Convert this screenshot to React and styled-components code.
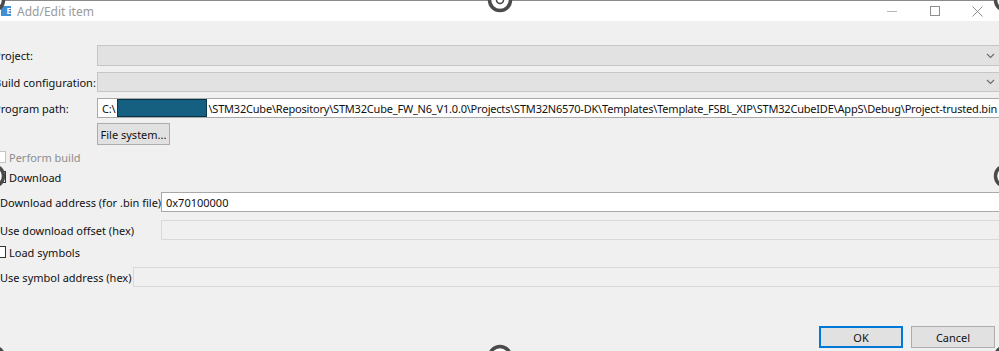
import React from 'react';
import styled, { createGlobalStyle } from 'styled-components';

const GlobalStyle = createGlobalStyle`
  html, body {
    margin: 0;
    padding: 0;
    background: #f0f0f0;
    overflow: hidden;
  }
`;

const Page = styled.div`
  position: relative;
  width: 999px;
  height: 351px;
  overflow: hidden;
  background: #f0f0f0;
  font-family: 'Noto Sans', 'Open Sans', sans-serif;
  font-size: 11px;
  color: #111;
`;

const TitleBar = styled.div`
  height: 21px;
  background: #ffffff;
  border-top: 1px solid #8a8a8a;
  box-sizing: border-box;
  display: flex;
  align-items: center;
`;

const AppIcon = styled.div`
  width: 10px;
  height: 10px;
  margin-left: 1px;
  background: #3d8fd6;
  color: #fff;
  font-size: 8px;
  font-weight: 700;
  line-height: 10px;
  text-align: right;
`;

const Title = styled.span`
  margin-left: 6px;
  color: #9a9a9a;
  font-size: 12px;
  flex: 1;
`;

const WinButton = styled.div`
  width: 43px;
  height: 20px;
  display: flex;
  align-items: center;
  justify-content: center;
`;

const Form = styled.div`
  display: flex;
  flex-direction: column;
  padding-top: 24px;
`;

const TopGrid = styled.div`
  display: grid;
  grid-template-columns: 97px 1fr;
  grid-template-rows: 21px 20px 20px auto;
  row-gap: 6px;
  margin-right: -6px;
`;

const Label = styled.div`
  display: flex;
  align-items: center;
  white-space: nowrap;
  margin-left: ${({ $shift }) => $shift || 0}px;
  color: ${({ $disabled }) => ($disabled ? '#8d8d8d' : '#111')};
`;

const Combo = styled.div`
  box-sizing: border-box;
  background: #e2e2e2;
  border: 1px solid #c6c6c6;
  display: flex;
  align-items: center;
  justify-content: flex-end;
  padding-right: 9px;
`;

const TextBox = styled.div`
  height: ${({ $h }) => $h || 21}px;
  box-sizing: border-box;
  background: ${({ $disabled }) => ($disabled ? '#f0f0f0' : '#ffffff')};
  border: 1px solid ${({ $disabled }) => ($disabled ? '#d9d9d9' : '#a9a9a9')};
  display: flex;
  align-items: center;
  padding-left: 4px;
  white-space: nowrap;
  overflow: hidden;
  letter-spacing: ${({ $tight }) => ($tight ? '-0.2px' : 'normal')};
`;

const Redacted = styled.span`
  flex-shrink: 0;
  display: inline-block;
  width: 90px;
  height: 18px;
  margin: 0 1px 0 2px;
  background: #156080;
  border: 1px solid #0b3448;
  box-sizing: border-box;
`;

const PushButton = styled.button`
  font-family: inherit;
  font-size: 11px;
  color: #111;
  height: 22px;
  width: ${({ $w }) => $w}px;
  padding: 0;
  background: #e1e1e1;
  border: 1px solid ${({ $default }) => ($default ? '#0078d7' : '#adadad')};
  box-shadow: ${({ $default }) => ($default ? 'inset 0 0 0 1px #0078d7' : 'none')};
`;

const FileButtonCell = styled.div`
  margin-top: -1px;
`;

const CheckRow = styled.div`
  height: 20px;
  display: flex;
  align-items: center;
  margin-top: ${({ $top }) => $top || 0}px;
  color: ${({ $disabled }) => ($disabled ? '#8d8d8d' : '#111')};
`;

const Box = styled.span`
  width: 12px;
  height: 12px;
  box-sizing: border-box;
  margin-left: -6px;
  margin-right: 3px;
  background: #fff;
  border: 1px solid ${({ $disabled }) => ($disabled ? '#c4c4c4' : '#333333')};
`;

const FieldGrid = styled.div`
  display: grid;
  grid-template-columns: ${({ $col }) => $col}px 1fr;
  row-gap: 8px;
  margin-top: ${({ $top }) => $top || 0}px;
  margin-right: -6px;
`;

const Footer = styled.div`
  display: flex;
  justify-content: flex-end;
  gap: 8px;
  margin-top: 39px;
  padding-right: 4px;
`;

const Handle = styled.svg`
  position: absolute;
  left: ${({ $x }) => $x - 13}px;
  top: ${({ $y }) => $y - 13}px;
  width: 26px;
  height: 26px;
`;

const Chevron = () => (
  <svg width="9" height="6" viewBox="0 0 9 6">
    <path d="M1 1l3.5 3.5L8 1" fill="none" stroke="#6a6a6a" strokeWidth="1.1" />
  </svg>
);

const HandleMark = ({ x, y }) => (
  <Handle $x={x} $y={y} viewBox="0 0 26 26">
    <circle cx="13" cy="13" r="10.5" fill="#fff" stroke="#4a4a4a" strokeWidth="3.5" />
    <circle cx="13" cy="13" r="3.5" fill="#fff" stroke="#4a4a4a" strokeWidth="1.6" />
  </Handle>
);

const handles = [
  [-7, 0], [500, 0], [1006, 0],
  [-7, 176], [1006, 176],
  [-7, 357], [500, 357], [1006, 357],
];

export default function App() {
  return (
    <Page>
      <GlobalStyle />
      <TitleBar>
        <AppIcon>E</AppIcon>
        <Title>Add/Edit item</Title>
        <WinButton>
          <svg width="10" height="10" viewBox="0 0 10 10">
            <path d="M0 5.5h10" stroke="#b5b5b5" strokeWidth="1" />
          </svg>
        </WinButton>
        <WinButton>
          <svg width="10" height="10" viewBox="0 0 10 10">
            <rect x="0.5" y="0.5" width="9" height="9" fill="none" stroke="#8f8f8f" />
          </svg>
        </WinButton>
        <WinButton>
          <svg width="11" height="11" viewBox="0 0 11 11">
            <path d="M0.5 0.5l10 10M10.5 0.5l-10 10" stroke="#8f8f8f" strokeWidth="1" />
          </svg>
        </WinButton>
      </TitleBar>

      <Form>
        <TopGrid>
          <Label $shift={-6}>Project:</Label>
          <Combo><Chevron /></Combo>
          <Label $shift={-6}>Build configuration:</Label>
          <Combo><Chevron /></Combo>
          <Label $shift={-6}>Program path:</Label>
          <TextBox $h={20} $tight>
            C:\<Redacted />\STM32Cube\Repository\STM32Cube_FW_N6_V1.0.0\Projects\STM32N6570-DK\Templates\Template_FSBL_XIP\STM32CubeIDE\AppS\Debug\Project-trusted.bin
          </TextBox>
          <div />
          <FileButtonCell>
            <PushButton $w={73}>File system...</PushButton>
          </FileButtonCell>
        </TopGrid>

        <CheckRow $top={2} $disabled>
          <Box $disabled />
          Perform build
        </CheckRow>
        <CheckRow>
          <Box />
          Download
        </CheckRow>

        <FieldGrid $col={161} $top={5}>
          <Label>Download address (for .bin file)</Label>
          <TextBox $h={20}>0x70100000</TextBox>
          <Label>Use download offset (hex)</Label>
          <TextBox $h={20} $disabled />
        </FieldGrid>

        <CheckRow $top={2}>
          <Box />
          Load symbols
        </CheckRow>

        <FieldGrid $col={133} $top={5}>
          <Label>Use symbol address (hex)</Label>
          <TextBox $h={20} $disabled />
        </FieldGrid>

        <Footer>
          <PushButton $w={84} $default>OK</PushButton>
          <PushButton $w={84}>Cancel</PushButton>
        </Footer>
      </Form>

      {handles.map(([x, y]) => (
        <HandleMark key={`${x}-${y}`} x={x} y={y} />
      ))}
    </Page>
  );
}
